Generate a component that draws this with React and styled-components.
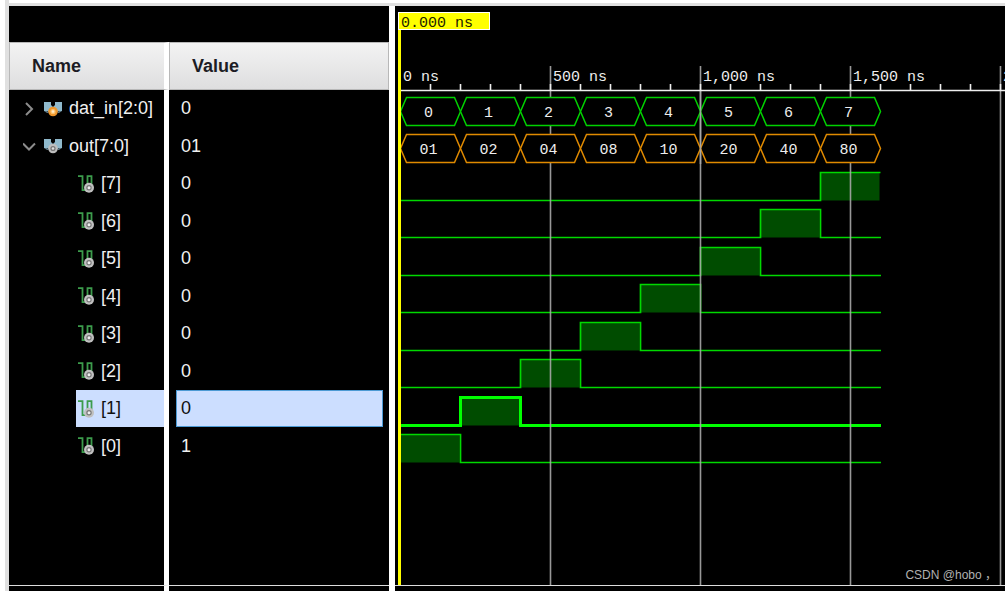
import React, { useState } from "react";
import styled, { createGlobalStyle, css } from "styled-components";

const signals = [
  { name: "dat_in[2:0]", value: "0", kind: "bus", port: "in" },
  { name: "out[7:0]", value: "01", kind: "bus", port: "out", open: true },
  { name: "[7]", value: "0", kind: "bit", slot: 7 },
  { name: "[6]", value: "0", kind: "bit", slot: 6 },
  { name: "[5]", value: "0", kind: "bit", slot: 5 },
  { name: "[4]", value: "0", kind: "bit", slot: 4 },
  { name: "[3]", value: "0", kind: "bit", slot: 3 },
  { name: "[2]", value: "0", kind: "bit", slot: 2 },
  { name: "[1]", value: "0", kind: "bit", slot: 1 },
  { name: "[0]", value: "1", kind: "bit", slot: 0 },
];

const buses = [
  { color: "#00d200", labels: ["0", "1", "2", "3", "4", "5", "6", "7"] },
  {
    color: "#e08a00",
    labels: ["01", "02", "04", "08", "10", "20", "40", "80"],
  },
];

/* wave chart scale */
const START = 5;
const SLOT = 60;
const END = START + SLOT * 8 + 1;
const ROW = 37.5;
const RULER = 84;

const rowTop = (index) => Math.floor(RULER + index * ROW);

const BusIcon = ({ port }) => (
  <svg width="18" height="16" viewBox="0 0 18 16" aria-hidden="true">
    <path d="M0 1h7v3l2 2 2-2V1h7v9h-3l-6 3-6-3H0z" fill="#8fb9cc" />
    <path d="M0 10h3l2 2H3zM18 10h-3l-2 2h2z" fill="#5c7886" />
    <circle cx="9" cy="10.500" r="4.800" fill={port === "in" ? "#ee962c" : "#bdbdbd"} />
    <circle cx="9" cy="10.500" r="2.600" fill={port === "in" ? "#ffc36c" : "#777"} />
    <circle cx="9" cy="10.500" r="1.300" fill={port === "in" ? "#ffeccb" : "#ddd"} />
  </svg>
);

const BitIcon = () => (
  <svg width="16" height="18" viewBox="0 0 16 18" aria-hidden="true">
    <path
      d="M0 1.200h4.500v14h5v-14h4v9"
      fill="none"
      stroke="#3c9c4c"
      strokeWidth="1.800"
    />
    <circle cx="11" cy="12.700" r="5" fill="#c0c0c0" />
    <circle cx="11" cy="12.700" r="2.700" fill="#777" />
    <circle cx="11" cy="12.700" r="1.500" fill="#eee" />
  </svg>
);

const Chevron = ({ open }) => (
  <svg width="14" height="14" viewBox="0 0 14 14" aria-hidden="true">
    <path
      d={open ? "M0 4.500l6 6 6-6" : "M3 1l6 6-6 6"}
      fill="none"
      stroke="#8c8c8c"
      strokeWidth="2"
    />
  </svg>
);

const BusWave = ({ index, color, labels }) => {
  const top = rowTop(index) + 7.5;
  const mid = top + 14;
  const bottom = top + 28;

  return (
    <g>
      {labels.map((label, i) => {
        const x = START + i * SLOT + 0.5;
        return (
          <g key={label}>
            <path
              d={`M${x} ${mid}L${x + 6} ${top}H${x + 54}L${x + 60} ${mid}L${x + 54} ${bottom}H${x + 6}Z`}
              fill="#000"
              stroke={color}
              strokeWidth="1.500"
            />
            <WaveText x={x + 28} y={mid + 5} textAnchor="middle">
              {label}
            </WaveText>
          </g>
        );
      })}
    </g>
  );
};

const BitWave = ({ index, slot, selected }) => {
  const high = rowTop(index) + 7.5;
  const low = high + 28;
  const rise = START + slot * SLOT + 0.5;
  const fall = rise + SLOT;
  const from = slot === 0 ? `M${rise} ${high}` : `M${START} ${low}H${rise}V${high}`;
  const to = slot === 7 ? "" : `V${low}H${END}`;

  return (
    <g>
      <rect x={rise} y={high} width={SLOT - 1} height={28} fill="#004c00" />
      <path
        d={`${from}H${fall}${to}`}
        fill="none"
        stroke={selected ? "#00ff00" : "#00d800"}
        strokeWidth={selected ? 3 : 1.7}
      />
    </g>
  );
};

const App = () => {
  const [selected, setSelected] = useState(8);
  const [open, setOpen] = useState(true);
  const rows = open ? signals : signals.slice(0, 2);

  return (
    <>
      <GlobalStyle />
      <Window>
        <SignalPane>
          <SignalTable>
            <thead>
              <tr>
                <HeaderCell>Name</HeaderCell>
                <HeaderCell>Value</HeaderCell>
              </tr>
            </thead>
            <tbody>
              {rows.map((signal, i) => (
                <SignalRow key={signal.name} onClick={() => setSelected(i)}>
                  <Cell>
                    <NameBox $bit={signal.kind === "bit"} $selected={i === selected}>
                      {signal.kind === "bus" ? (
                        <>
                          <Toggle
                            type="button"
                            aria-label={`Expand ${signal.name}`}
                            onClick={() => signal.open && setOpen(!open)}
                          >
                            <Chevron open={signal.open && open} />
                          </Toggle>
                          <BusIcon port={signal.port} />
                        </>
                      ) : (
                        <BitIcon />
                      )}
                      {signal.name}
                    </NameBox>
                  </Cell>
                  <Cell>
                    <ValueBox $selected={i === selected}>{signal.value}</ValueBox>
                  </Cell>
                </SignalRow>
              ))}
              <tr>
                <Cell />
                <Cell />
              </tr>
            </tbody>
            <tfoot>
              <tr>
                <FootCell />
                <FootCell />
              </tr>
            </tfoot>
          </SignalTable>
        </SignalPane>
        <WavePane>
          <Chart>
            {rows.map(
              (signal, i) =>
                signal.kind === "bit" && (
                  <BitWave
                    key={signal.name}
                    index={i}
                    slot={signal.slot}
                    selected={i === selected}
                  />
                )
            )}
            {[1, 2, 3, 4, 5, 6, 7, 8].map((n) => (
              <GridLine key={n} x1={START + n * 150 + 0.5} x2={START + n * 150 + 0.5} y1="60" y2="100%" />
            ))}
            {buses.map((bus, i) => (
              <BusWave key={bus.color} index={i} {...bus} />
            ))}
            <GridLine x1={START + 300.5} x2={START + 300.5} y1="84" y2="158" />
            <RulerLine x1={START} x2="100%" y1="84.5" y2="84.5" />
            {Array.from({ length: 40 }, (_, n) => (
              <RulerLine
                key={n}
                x1={START + (n + 1) * 30 + 0.5}
                x2={START + (n + 1) * 30 + 0.5}
                y1="78"
                y2="84"
              />
            ))}
            {["0 ns", "500 ns", "1,000 ns", "1,500 ns", "2,000 ns"].map((label, n) => (
              <WaveText key={label} x={START + n * 150 + 3} y="75">
                {label}
              </WaveText>
            ))}
            <rect x="3" y="6" width="3" height="100%" fill="#ffff00" />
            <rect x="3.500" y="6.500" width="91" height="17" fill="#ffff00" stroke="#fff" />
            <CursorText x="6" y="21">
              0.000 ns
            </CursorText>
          </Chart>
        </WavePane>
        <Watermark>CSDN @hobo ，</Watermark>
      </Window>
    </>
  );
};

export default App;

const GlobalStyle = createGlobalStyle`
  body {
    margin: 0;
    background: #fff;
  }
`;

const Window = styled.main`
  position: relative;
  display: flex;
  gap: 6px;
  box-sizing: border-box;
  height: 100vh;
  margin-left: 5px;
  padding-top: 3px;
  border-left: 4px solid #e0e0e0;
  font-family: "Liberation Sans", Arial, sans-serif;
  overflow: hidden;

  &::before {
    content: "";
    position: absolute;
    top: 3px;
    left: 0;
    right: 0;
    height: 3px;
    background: #e0e0e0;
  }
`;

const paneFrame = css`
  box-sizing: border-box;
  margin-top: 3px;
  background: #000;
`;

const SignalPane = styled.section`
  ${paneFrame}
  flex: 0 0 380px;
  padding-top: 36px;
`;

const SignalTable = styled.table`
  width: 100%;
  height: 100%;
  table-layout: fixed;
  border-collapse: separate;
  border-spacing: 0;
`;

const HeaderCell = styled.th`
  box-sizing: border-box;
  height: 48px;
  padding: 0 22px;
  border: 1px solid #b8b8b8;
  background: linear-gradient(#f3f3f3, #dededf);
  color: #1c1c24;
  font-size: 18px;
  text-align: left;

  &:first-child {
    width: 160px;
    border-right: 5px solid #fff;
  }
`;

const SignalRow = styled.tr`
  height: 37px;
  cursor: default;

  &:nth-child(even) {
    height: 38px;
  }
`;

const Cell = styled.td`
  height: inherit;
  padding: 0;

  &:first-child {
    border-right: 5px solid #fff;
  }
`;

const FootCell = styled(Cell)`
  box-sizing: border-box;
  height: 6px;
  border-top: 1px solid #ddd;
`;

const NameBox = styled.div`
  display: flex;
  align-items: center;
  gap: 7px;
  box-sizing: border-box;
  height: 37px;
  margin-left: ${(props) => (props.$bit ? "67px" : "14px")};
  padding-left: ${(props) => (props.$bit ? "2px" : "0")};
  background: ${(props) => (props.$selected ? "#ccdeff" : "transparent")};
  color: ${(props) => (props.$selected ? "#101010" : "#f0f0f0")};
  font-size: 18px;
  white-space: nowrap;
`;

const Toggle = styled.button`
  display: flex;
  padding: 0;
  border: 0;
  background: none;
`;

const ValueBox = styled.div`
  display: flex;
  align-items: center;
  box-sizing: border-box;
  height: 37px;
  margin: 0 6px 0 7px;
  padding-left: 4px;
  border: 1px solid ${(props) => (props.$selected ? "#4c9ad4" : "transparent")};
  background: ${(props) => (props.$selected ? "#ccdeff" : "transparent")};
  color: ${(props) => (props.$selected ? "#101010" : "#f0f0f0")};
  font-size: 18px;
`;

const WavePane = styled.section`
  ${paneFrame}
  flex: 1;
  min-width: 0;
  border-bottom: 5px solid #000;
`;

const Chart = styled.svg`
  display: block;
  box-sizing: border-box;
  width: 100%;
  height: 100%;
  border-bottom: 1px solid #ddd;
`;

const GridLine = styled.line`
  stroke: #a8a8a8;
  stroke-opacity: 0.9;
  stroke-width: 1.6px;
`;

const RulerLine = styled.line`
  stroke: #eee;
  stroke-width: 1.6px;
`;

const WaveText = styled.text`
  fill: #eee;
  font-family: "Liberation Mono", "Courier New", monospace;
  font-size: 15px;
`;

const CursorText = styled(WaveText)`
  fill: #222200;
`;

const Watermark = styled.div`
  position: absolute;
  right: 8px;
  bottom: 9px;
  color: #b0b0b0;
  font-family: "Liberation Sans", "Noto Sans CJK SC", sans-serif;
  font-size: 12px;
`;
